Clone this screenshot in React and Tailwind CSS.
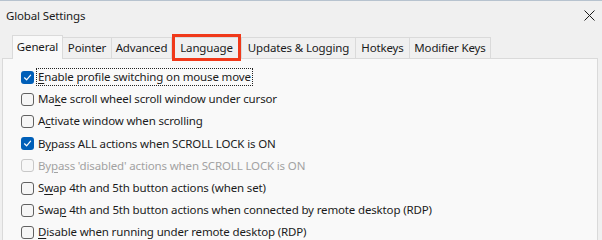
import React from "react";

const tabs = [
  { label: "General", w: "w-[51px]", active: true },
  { label: "Pointer", w: "w-[49px]" },
  { label: "Advanced", w: "w-[60px]" },
  { label: "Language", w: "w-[70px]", marked: true },
  { label: "Updates & Logging", w: "w-[114px]" },
  { label: "Hotkeys", w: "w-[54px]" },
  { label: "Modifier Keys", w: "w-[81px]" },
];

// label split around the underlined access key
const options = [
  { pre: "", key: "E", post: "nable profile switching on mouse move", checked: true, focused: true },
  { pre: "Ma", key: "k", post: "e scroll wheel scroll window under cursor" },
  { pre: "A", key: "c", post: "tivate window when scrolling" },
  { pre: "B", key: "y", post: "pass ALL actions when SCROLL LOCK is ON", checked: true },
  { pre: "By", key: "p", post: "ass 'disabled' actions when SCROLL LOCK is ON", disabled: true },
  { pre: "S", key: "w", post: "ap 4th and 5th button actions (when set)" },
  { pre: "Swa", key: "p", post: " 4th and 5th button actions when connected by remote desktop (RDP)" },
  { pre: "", key: "D", post: "isable when running under remote desktop (RDP)" },
];

const Checkbox = ({ checked, disabled }) => {
  if (checked) {
    return (
      <span className="w-[13px] h-[13px] rounded-[3px] bg-[#005fb8] flex items-center justify-center shrink-0">
        <svg width="9" height="9" viewBox="0 0 9 9" fill="none">
          <path d="M1.5 4.8 L3.6 6.8 L7.6 2.2" stroke="#fff" strokeWidth="1.2" strokeLinecap="round" strokeLinejoin="round" />
        </svg>
      </span>
    );
  }
  return (
    <span
      className={`w-[13px] h-[13px] rounded-[3px] border shrink-0 ${
        disabled ? "border-[#c8c8c8] bg-[#f7f7f7]" : "border-[#616161] bg-[#f6f6f6]"
      }`}
    />
  );
};

export default function App() {
  return (
    <div className="w-[602px] h-[240px] overflow-hidden bg-[#f0f0f0] flex flex-col text-[11.5px] tracking-[-0.15px] text-[#1b1b1b] font-['Noto_Sans',sans-serif]">
      <div className="h-px bg-[#b7c3cf] shrink-0" />

      {/* title bar */}
      <div className="h-[29px] flex items-center justify-between pl-[6px] pr-[6px] shrink-0">
        <span className="leading-none">Global Settings</span>
        <svg width="11" height="11" viewBox="0 0 11 11" className="mr-[1px]">
          <path d="M0.5 0.5 L10.5 10.5 M10.5 0.5 L0.5 10.5" stroke="#1b1b1b" strokeWidth="1" />
        </svg>
      </div>

      {/* tab strip */}
      <div className="h-[28px] flex items-end pl-[12px] shrink-0 relative z-10">
        {tabs.map((t) => (
          <div
            key={t.label}
            className={`${t.w} relative flex items-center justify-center border-[#dadada] whitespace-nowrap ${
              t.active
                ? "h-[24px] bg-[#f9f9f9] border-l border-t border-r -mb-px"
                : "h-[21px] bg-[#f0f0f0] border-t border-r"
            }`}
          >
            <span className={t.active ? "pb-[2px]" : ""}>{t.label}</span>
            {t.marked && (
              <div className="absolute left-0 right-0 top-[-4px] bottom-[-3px] border-[3px] border-[#f0391a]" />
            )}
          </div>
        ))}
      </div>

      {/* panel */}
      <div className="flex-1 ml-[2px] mr-[4px] border border-[#dadada] bg-[#f9f9f9] pt-[7px] pl-[18px]">
        {options.map((o, i) => (
          <div key={i} className="h-[22.2px] flex items-center gap-[3px]">
            <Checkbox checked={o.checked} disabled={o.disabled} />
            <span
              className={`whitespace-nowrap leading-[16px] px-[1px] ${
                o.disabled ? "text-[#a2a2a2]" : ""
              } ${o.focused ? "outline outline-1 outline-dotted outline-[#222]" : ""}`}
            >
              {o.pre}
              <span className="underline underline-offset-2">{o.key}</span>
              {o.post}
            </span>
          </div>
        ))}
      </div>
    </div>
  );
}
